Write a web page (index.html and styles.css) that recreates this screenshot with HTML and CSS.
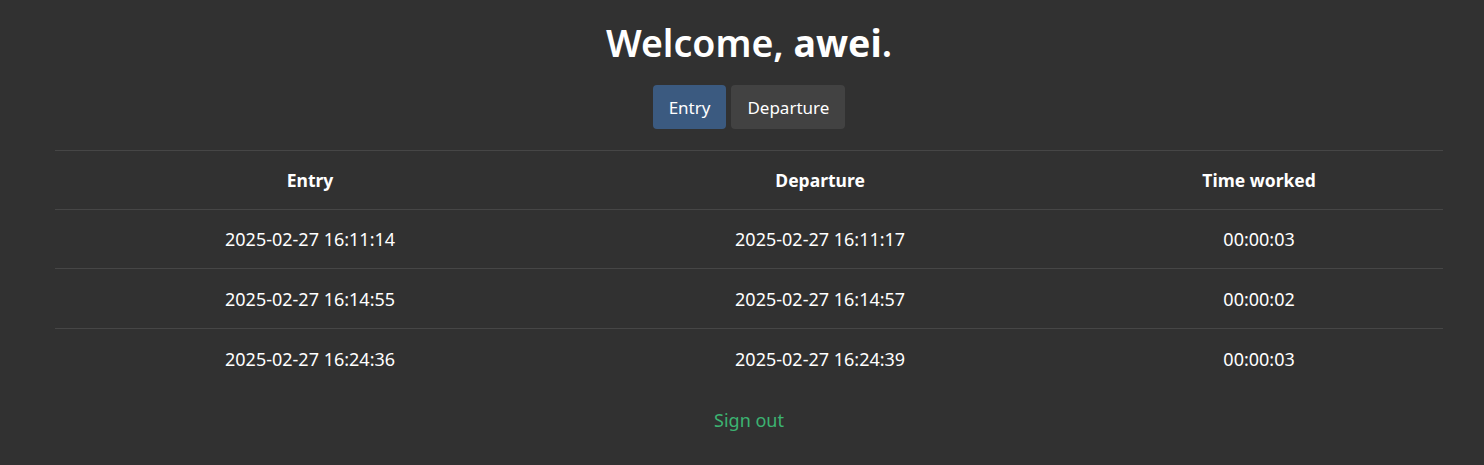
FILE: index.html
```html
<!DOCTYPE html>
<html lang="en">
<head>
<meta charset="utf-8">
<title>Welcome</title>
<link rel="stylesheet" href="styles.css">
</head>
<body>
<main class="page">
  <h1 class="title">Welcome, <strong>awei</strong>.</h1>
  <div class="actions">
    <button class="btn btn-primary" type="button">Entry</button>
    <button class="btn btn-secondary" type="button">Departure</button>
  </div>
  <table class="log">
    <colgroup>
      <col class="col-wide">
      <col class="col-wide">
      <col class="col-narrow">
    </colgroup>
    <thead>
      <tr><th>Entry</th><th>Departure</th><th>Time worked</th></tr>
    </thead>
    <tbody>
      <tr><td>2025-02-27 16:11:14</td><td>2025-02-27 16:11:17</td><td>00:00:03</td></tr>
      <tr><td>2025-02-27 16:14:55</td><td>2025-02-27 16:14:57</td><td>00:00:02</td></tr>
      <tr><td>2025-02-27 16:24:36</td><td>2025-02-27 16:24:39</td><td>00:00:03</td></tr>
    </tbody>
  </table>
  <a class="signout" href="#">Sign out</a>
</main>
</body>
</html>
```
FILE: styles.css
```css
html, body {
  margin: 0;
  background: #313131;
  color: #ffffff;
  font-family: "Noto Sans", "Open Sans", sans-serif;
}
.page {
  padding: 16px 41px 0 55px;
  display: flex;
  flex-direction: column;
  align-items: center;
}
.title {
  margin: 0;
  font-size: 37.5px;
  font-weight: 600;
  line-height: 54px;
}
.title strong {
  font-weight: 700;
}
.actions {
  display: flex;
  gap: 5px;
  margin-top: 15px;
}
.btn {
  font-family: inherit;
  font-size: 17px;
  color: #ffffff;
  border: none;
  border-radius: 4px;
  height: 44px;
  padding: 0 16px;
  cursor: pointer;
}
.btn-primary { background: #3b5a80; }
.btn-secondary { background: #424242; }
.log {
  width: 100%;
  border-collapse: collapse;
  table-layout: fixed;
  margin-top: 21px;
  font-size: 18px;
}
.col-wide { width: 36.75%; }
.col-narrow { width: 26.5%; }
.log th, .log td {
  text-align: center;
  height: 59px;
  padding: 0;
  border-top: 1px solid #464646;
}
.log th {
  font-weight: 700;
  font-size: 17.5px;
  height: 58px;
}
.log tbody tr:first-child td { height: 58px; }
.signout {
  margin-top: 20px;
  color: #3cb371;
  text-decoration: none;
  font-size: 18px;
}
```
